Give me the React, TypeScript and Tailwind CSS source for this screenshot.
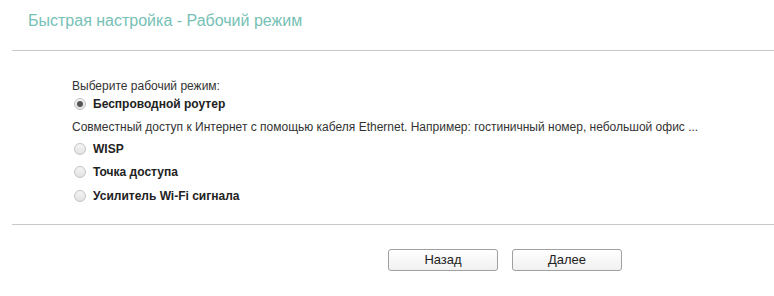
import React from "react";

function Radio({ checked }: { checked?: boolean }) {
  return (
    <span className="inline-flex items-center justify-center w-[12px] h-[12px] rounded-full border border-[#c4c4c4] bg-[linear-gradient(#f4f4f4,#e2e2e2)] mr-[7px]">
      {checked && <span className="w-[6px] h-[6px] rounded-full bg-[#555]" />}
    </span>
  );
}

export default function App() {
  return (
    <div className="w-[774px] h-[296px] bg-white font-['Liberation_Sans',Arial,sans-serif] text-[#333]">
      <div className="pl-[12px]">
        <div className="h-[51px] border-b border-[#c8c8c8] pl-[16px] pt-[11px]">
          <div className="text-[16px] leading-[20px] text-[#76c1b6]">Быстрая настройка - Рабочий режим</div>
        </div>
      </div>
      <div className="pl-[72px] pt-[26px] text-[12px] leading-[18px]">
        <div className="h-[18px]">Выберите рабочий режим:</div>
        <div className="h-[18px] flex items-center pl-[2px] font-bold text-[#222]">
          <Radio checked />
          Беспроводной роутер
        </div>
        <div className="h-[18px] mt-[5px]">
          Совместный доступ к Интернет с помощью кабеля Ethernet. Например: гостиничный номер, небольшой офис ...
        </div>
        <div className="h-[18px] mt-[4px] flex items-center pl-[2px] font-bold text-[#222]">
          <Radio />
          WISP
        </div>
        <div className="h-[18px] mt-[5px] flex items-center pl-[2px] font-bold text-[#222]">
          <Radio />
          Точка доступа
        </div>
        <div className="h-[18px] mt-[6px] flex items-center pl-[2px] font-bold text-[#222]">
          <Radio />
          Усилитель Wi-Fi сигнала
        </div>
      </div>
      <div className="pl-[12px] mt-[19px]">
        <div className="border-t border-[#c8c8c8]" />
      </div>
      <div className="flex pl-[388px] gap-[14px] mt-[24px]">
        <button className="w-[110px] h-[22px] rounded-[3px] border border-[#a0a0a0] bg-[linear-gradient(#ffffff,#f0f0f0)] text-[13px] text-[#222]">Назад</button>
        <button className="w-[110px] h-[22px] rounded-[3px] border border-[#a0a0a0] bg-[linear-gradient(#ffffff,#f0f0f0)] text-[13px] text-[#222]">Далее</button>
      </div>
    </div>
  );
}
